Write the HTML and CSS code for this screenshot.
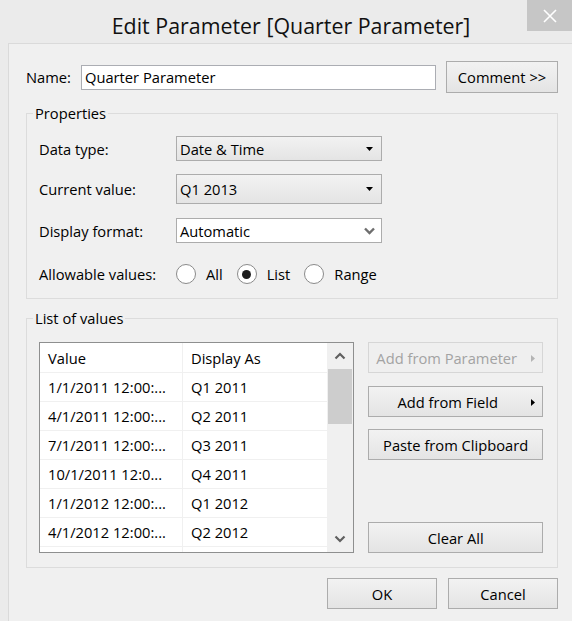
FILE: index.html
```html
<!DOCTYPE html>
<html>
<head>
<meta charset="utf-8">
<link rel="stylesheet" href="styles.css">
</head>
<body>
<div class="window">
  <div class="titlebar">
    <div class="title">Edit Parameter [Quarter Parameter]</div>
    <div class="close">
      <svg width="14" height="14" viewBox="0 0 14 14"><path d="M1 1 L13 13 M13 1 L1 13" stroke="#fff" stroke-width="1.6" fill="none"/></svg>
    </div>
  </div>
  <div class="panel">
    <div class="name-row">
      <span class="name-label">Name:</span>
      <div class="textbox">Quarter Parameter</div>
      <div class="btn comment">Comment &gt;&gt;</div>
    </div>

    <fieldset class="group props">
      <legend>Properties</legend>
      <div class="prow r1">
        <span class="plabel">Data type:</span>
        <div class="combo"><span>Date &amp; Time</span><svg class="tri" width="7" height="4" viewBox="0 0 7 4"><path d="M0 0 H7 L3.5 4 Z" fill="#000"/></svg></div>
      </div>
      <div class="prow r2">
        <span class="plabel">Current value:</span>
        <div class="combo"><span>Q1 2013</span><svg class="tri" width="7" height="4" viewBox="0 0 7 4"><path d="M0 0 H7 L3.5 4 Z" fill="#000"/></svg></div>
      </div>
      <div class="prow r3">
        <span class="plabel">Display format:</span>
        <div class="combo white"><span>Automatic</span><svg class="chev" width="11" height="8" viewBox="0 0 11 8"><path d="M1 1.5 L5.5 6 L10 1.5" stroke="#6e6e6e" stroke-width="2.4" fill="none"/></svg></div>
      </div>
      <div class="prow r4">
        <span class="plabel">Allowable values:</span>
        <div class="radios">
          <span class="opt"><span class="radio"></span>All</span>
          <span class="opt"><span class="radio on"></span>List</span>
          <span class="opt"><span class="radio"></span>Range</span>
        </div>
      </div>
    </fieldset>

    <fieldset class="group values">
      <legend>List of values</legend>
      <div class="values-body">
        <div class="listbox">
          <div class="table">
            <div class="trow head"><div class="c1">Value</div><div class="c2">Display As</div></div>
            <div class="trow"><div class="c1">1/1/2011 12:00:...</div><div class="c2">Q1 2011</div></div>
            <div class="trow"><div class="c1">4/1/2011 12:00:...</div><div class="c2">Q2 2011</div></div>
            <div class="trow"><div class="c1">7/1/2011 12:00:...</div><div class="c2">Q3 2011</div></div>
            <div class="trow"><div class="c1">10/1/2011 12:0...</div><div class="c2">Q4 2011</div></div>
            <div class="trow"><div class="c1">1/1/2012 12:00:...</div><div class="c2">Q1 2012</div></div>
            <div class="trow"><div class="c1">4/1/2012 12:00:...</div><div class="c2">Q2 2012</div></div>
            <div class="trow"><div class="c1"></div><div class="c2"></div></div>
          </div>
          <div class="scrollbar">
            <div class="sb-btn"><svg width="12" height="8" viewBox="0 0 12 8"><path d="M1.5 6.5 L6 2 L10.5 6.5" stroke="#606060" stroke-width="2.2" fill="none"/></svg></div>
            <div class="thumb"></div>
            <div class="sb-space"></div>
            <div class="sb-btn"><svg width="12" height="8" viewBox="0 0 12 8"><path d="M1.5 1.5 L6 6 L10.5 1.5" stroke="#606060" stroke-width="2.2" fill="none"/></svg></div>
          </div>
        </div>
        <div class="side">
          <div class="btn sbtn disabled"><span class="sl">Add from Parameter</span><svg class="arrow" width="4" height="7" viewBox="0 0 4 7"><path d="M0 0 L4 3.5 L0 7 Z" fill="#b4b4b4"/></svg></div>
          <div class="btn sbtn field"><span class="sc">Add from Field</span><svg class="arrow" width="4" height="7" viewBox="0 0 4 7"><path d="M0 0 L4 3.5 L0 7 Z" fill="#000"/></svg></div>
          <div class="btn sbtn paste">Paste from Clipboard</div>
          <div class="btn sbtn clear">Clear All</div>
        </div>
      </div>
    </fieldset>

    <div class="footer">
      <div class="btn fbtn">OK</div>
      <div class="btn fbtn">Cancel</div>
    </div>
  </div>
</div>
</body>
</html>
```

FILE: styles.css
```css
* { box-sizing: border-box; }
html, body {
  margin: 0;
  padding: 0;
  width: 572px;
  height: 621px;
  overflow: hidden;
  background: #ebebeb;
  font-family: "Open Sans", "Noto Sans", "Liberation Sans", sans-serif;
  font-size: 14.7px;
  color: #000;
}
.window {
  width: 572px;
  height: 621px;
  display: flex;
  flex-direction: column;
}
.titlebar {
  height: 43px;
  display: flex;
  align-items: flex-start;
}
.title {
  flex: 1;
  text-align: center;
  font-size: 21.4px;
  line-height: 26px;
  padding-top: 13px;
  padding-left: 55px;
  white-space: nowrap;
  color: #111;
}
.close {
  width: 45px;
  height: 31px;
  background: #c6c6c6;
  display: flex;
  align-items: center;
  justify-content: center;
}
.panel {
  flex: 1;
  margin-left: 8px;
  background: #f0f0f0;
  border-top: 1px solid #dadada;
  border-left: 1px solid #dadada;
  padding: 17px 14px 0 17px;
}
.name-row {
  height: 32px;
  display: flex;
  align-items: center;
}
.name-label {
  width: 55px;
}
.textbox {
  width: 355px;
  height: 25px;
  background: #fff;
  border: 1px solid #abadb3;
  padding-left: 3px;
  line-height: 23px;
}
.btn {
  background: linear-gradient(#f2f2f2, #e4e4e4);
  border: 1px solid #acacac;
  display: flex;
  align-items: center;
  justify-content: center;
  white-space: nowrap;
}
.comment {
  margin-left: 10px;
  width: 112px;
  height: 32px;
}
.group {
  margin: 0;
  border: 1px solid #dcdcdc;
  min-inline-size: 0;
}
.group legend {
  padding: 0 2px;
  margin-left: -6px;
  line-height: 18px;
}
.props {
  margin-top: 11px;
  padding: 0 12px 13px 12px;
}
.prow {
  display: flex;
  align-items: center;
}
.plabel {
  width: 137px;
}
.r1 { height: 25px; margin-top: 14px; }
.r2 { height: 30px; margin-top: 13px; }
.r3 { height: 25px; margin-top: 14px; }
.r4 { height: 22px; margin-top: 20px; }
.combo {
  width: 206px;
  height: 100%;
  background: linear-gradient(#f2f2f2, #e4e4e4);
  border: 1px solid #acacac;
  display: flex;
  align-items: center;
  justify-content: space-between;
  padding: 0 8px 0 3px;
}
.combo.white {
  background: #fff;
  padding-right: 6px;
}
.radios {
  display: flex;
  align-items: center;
  gap: 14px;
}
.opt {
  display: flex;
  align-items: center;
  gap: 10px;
}
.radio {
  width: 20px;
  height: 20px;
  border-radius: 50%;
  border: 1px solid #8a8a8a;
  background: #fff;
  display: flex;
  align-items: center;
  justify-content: center;
}
.radio.on::after {
  content: "";
  width: 9px;
  height: 9px;
  border-radius: 50%;
  background: #1e1e1e;
}
.values {
  margin-top: 10px;
  padding: 0 14px 14px 12px;
}
.values-body {
  margin-top: 15px;
  display: flex;
  gap: 14px;
}
.listbox {
  width: 316px;
  height: 211px;
  border: 1px solid #8e8f8f;
  display: flex;
  background: #fff;
  overflow: hidden;
}
.table {
  width: 288px;
  overflow: hidden;
}
.trow {
  display: flex;
  height: 29px;
  border-bottom: 1px solid #f0f0f0;
}
.trow.head {
  height: 30px;
}
.c1, .c2 {
  display: flex;
  align-items: center;
  white-space: nowrap;
  overflow: hidden;
}
.c1 {
  width: 143px;
  padding-left: 8px;
  border-right: 1px solid #f0f0f0;
}
.c2 {
  flex: 1;
  padding-left: 8px;
}
.scrollbar {
  width: 26px;
  background: #f0f0f0;
  display: flex;
  flex-direction: column;
}
.sb-btn {
  height: 26px;
  display: flex;
  align-items: center;
  justify-content: center;
}
.thumb {
  height: 55px;
  margin: 0 1px;
  background: #cdcdcd;
}
.sb-space { flex: 1; }
.side {
  width: 175px;
  display: flex;
  flex-direction: column;
}
.sbtn {
  height: 31px;
  position: relative;
}
.sbtn + .sbtn { margin-top: 12px; }
.sbtn.field { margin-top: 13px; padding-right: 16px; }
.sbtn.clear { margin-top: auto; }
.sbtn.disabled {
  background: #efefef;
  border-color: #d6d6d6;
  color: #a3a3a3;
  justify-content: flex-start;
  padding-left: 7px;
}
.sbtn .arrow {
  position: absolute;
  right: 7px;
  top: 12px;
}
.footer {
  margin-top: 10px;
  display: flex;
  justify-content: flex-end;
  gap: 11px;
}
.fbtn {
  width: 110px;
  height: 31px;
}
```
